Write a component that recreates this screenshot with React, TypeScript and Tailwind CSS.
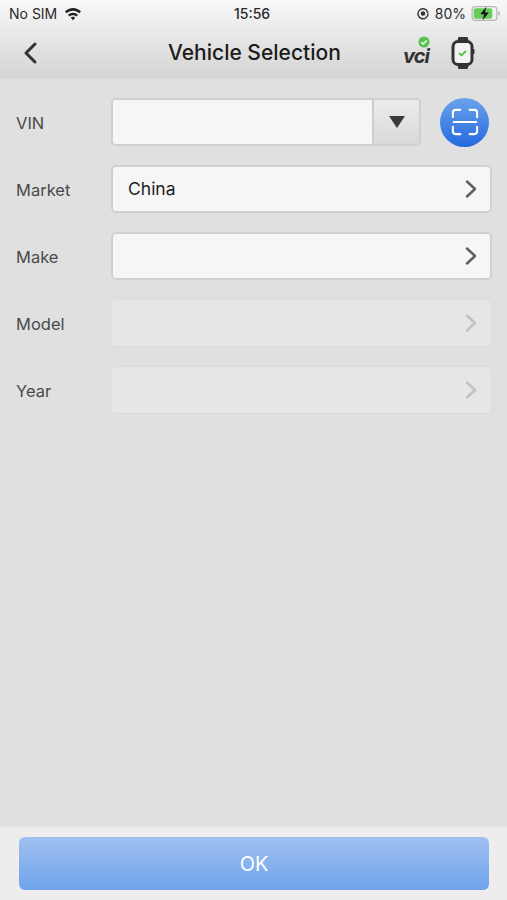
import React from "react";

const font = { fontFamily: "Inter, 'Liberation Sans', sans-serif" };

const Chevron = ({ disabled }: { disabled?: boolean }) => (
  <svg width="14" height="20" viewBox="0 0 14 20" fill="none" className="shrink-0">
    <path
      d="M3 2.500 L11 10 L3 17.500"
      stroke={disabled ? "#c2c2c2" : "#606060"}
      strokeWidth="2.500"
      strokeLinecap="round"
      strokeLinejoin="round"
    />
  </svg>
);

const Row = ({ label, value, disabled }: { label: string; value?: string; disabled?: boolean }) => (
  <div className="flex items-center h-[48px]">
    <div className="w-[111px] pl-4 pt-[2px] text-[16.500px] text-[#4a4a4a]">{label}</div>
    <div
      className={
        disabled
          ? "w-[381px] h-[48px] rounded-[5px] border border-[#dcdcdc] bg-[#e6e6e6] flex items-center justify-between pl-4 pr-[13px]"
          : "w-[381px] h-[48px] rounded-[5px] border-2 border-[#d0d0d0] bg-[#f6f6f6] flex items-center justify-between pl-[15px] pr-[12px]"
      }
    >
      <span className="text-[17.500px] text-[#222222]">{value}</span>
      <Chevron disabled={disabled} />
    </div>
  </div>
);

export default function App() {
  return (
    <div className="w-[507px] h-[900px] flex flex-col bg-[#e0e0e0] overflow-hidden" style={font}>
      {/* Status + nav */}
      <div className="h-[79px] shrink-0 bg-gradient-to-b from-[#f8f8f8] to-[#d4d4d4] border-b border-[#d8d8d8]">
        <div className="h-[27px] flex items-center justify-between pl-[9px] pr-[6px] text-[14px] text-[#2a2a2a] relative">
          <div className="flex items-center gap-[7px]">
            <span>No SIM</span>
            <svg width="18" height="15" viewBox="0 0 18 14" fill="#222222">
              <path d="M9 1.500c3.100 0 5.900 1.300 8 3.400l-1.700 1.900C13.600 5.200 11.400 4.200 9 4.200s-4.600 1-6.300 2.600L1 4.900C3.100 2.800 5.900 1.500 9 1.500z" />
              <path d="M9 6.200c2 0 3.700.7 5 2l-1.700 1.900C11.400 9.200 10.300 8.800 9 8.800s-2.400.4-3.300 1.300L4 8.200c1.300-1.300 3-2 5-2z" />
              <path d="M9 10.300c.9 0 1.700.3 2.200.9L9 13.800l-2.200-2.600c.5-.6 1.300-.9 2.200-.9z" />
            </svg>
          </div>
          <span className="absolute left-[234px] font-medium">15:56</span>
          <div className="flex items-center gap-[5px]">
            <svg width="14" height="13" viewBox="0 0 13 13" fill="none">
              <path d="M10.800 4.200A5 5 0 1 0 11.500 6.500" stroke="#333333" strokeWidth="1.400" />
              <path d="M9.500 4.500h3l-1.500 2z" fill="#333333" />
              <circle cx="6.500" cy="6.500" r="2.300" fill="#333333" />
            </svg>
            <span>80%</span>
            <svg width="30" height="15" viewBox="0 0 29 15" fill="none">
              <rect x="0.600" y="0.600" width="24.800" height="13.800" rx="3.500" stroke="#b5b5b5" strokeWidth="1.200" />
              <rect x="2.200" y="2.200" width="18.500" height="10.600" rx="2" fill="#66cc5a" />
              <path d="M26.700 5v5c1.200-.4 1.800-1.300 1.800-2.500s-.6-2.100-1.800-2.500z" fill="#b5b5b5" />
              <path d="M14.800 .8L8.800 8.300h3.800l-1.400 5.900 6.200-7.700h-3.900z" fill="#151515" />
            </svg>
          </div>
        </div>
        <div className="h-[51px] flex items-center relative">
          <div className="w-[64px] pl-[22px]">
            <svg width="16" height="24" viewBox="0 0 16 24" fill="none">
              <path d="M13 3 L4 12 L13 21" stroke="#333333" strokeWidth="3" strokeLinecap="round" strokeLinejoin="round" />
            </svg>
          </div>
          <div className="absolute left-[168px] top-[10px] text-[21px] font-medium text-[#1c1c1c] whitespace-nowrap leading-[32px]">
            Vehicle Selection
          </div>
          <div className="ml-auto flex items-center pr-[32px] gap-[20px]">
            <div className="relative w-[28px] h-[26px]">
              <span className="absolute left-0 bottom-[-1px] text-[20px] leading-[22px] font-bold italic text-[#333333] tracking-[-1px]">
                vci
              </span>
              <svg className="absolute left-[15px] top-[-4px]" width="12" height="12" viewBox="0 0 13 13">
                <circle cx="6.500" cy="6.500" r="6" fill="#55c24f" />
                <path d="M3.500 6.700l2.100 2 3.900-4" stroke="#ffffff" strokeWidth="1.400" fill="none" />
              </svg>
            </div>
            <svg width="24" height="34" viewBox="0 0 24 34" fill="none">
              <path d="M6 6 L7.500 1h9L18 6zM6 28l1.500 5h9L18 28z" fill="#333333" />
              <rect x="2" y="5.500" width="19" height="23" rx="5" fill="#f2f2f2" stroke="#333333" strokeWidth="3" />
              <rect x="21.500" y="13" width="2" height="5" rx="1" fill="#333333" />
              <path d="M8 17l2.500 2.300 4.500-4.300" stroke="#55c24f" strokeWidth="1.800" fill="none" />
            </svg>
          </div>
        </div>
      </div>

      {/* Form */}
      <div className="flex-1 flex flex-col gap-[19px] pt-[19px]">
        <div className="flex items-center h-[48px]">
          <div className="w-[111px] pl-4 pt-[2px] text-[16.500px] text-[#4a4a4a]">VIN</div>
          <div className="w-[310px] h-[48px] flex rounded-[5px] border-2 border-[#d0d0d0] overflow-hidden">
            <div className="flex-1 bg-[#f6f6f6]" />
            <div className="w-[47px] border-l-2 border-[#cdcdcd] bg-gradient-to-b from-[#ececec] to-[#d9d9d9] flex items-center justify-center">
              <svg width="16" height="12" viewBox="0 0 16 12">
                <path d="M0 0h16L8 12z" fill="#3a3a3a" />
              </svg>
            </div>
          </div>
          <div className="ml-[19px] w-[49px] h-[49px] rounded-full bg-gradient-to-b from-[#6aa2ec] to-[#2368e0] flex items-center justify-center">
            <svg width="28" height="28" viewBox="0 0 30 30" fill="none" stroke="#ffffff" strokeWidth="2.200" strokeLinecap="round" strokeLinejoin="round">
              <path d="M2 10V5a3 3 0 0 1 3-3h5M20 2h5a3 3 0 0 1 3 3v5M2 20v5a3 3 0 0 0 3 3h5M20 28h5a3 3 0 0 0 3-3v-5" />
              <path d="M3 15h24" />
            </svg>
          </div>
        </div>
        <Row label="Market" value="China" />
        <Row label="Make" />
        <Row label="Model" disabled />
        <Row label="Year" disabled />
      </div>

      {/* Footer */}
      <div className="h-[74px] shrink-0 bg-[#eeecec] border-t border-[#e4e4e4] pt-[10px] px-[19px]">
        <button className="w-[470px] h-[53px] rounded-[6px] bg-gradient-to-b from-[#a0c0f1] to-[#6ea3ec] text-white text-[20px]">
          OK
        </button>
      </div>
    </div>
  );
}
